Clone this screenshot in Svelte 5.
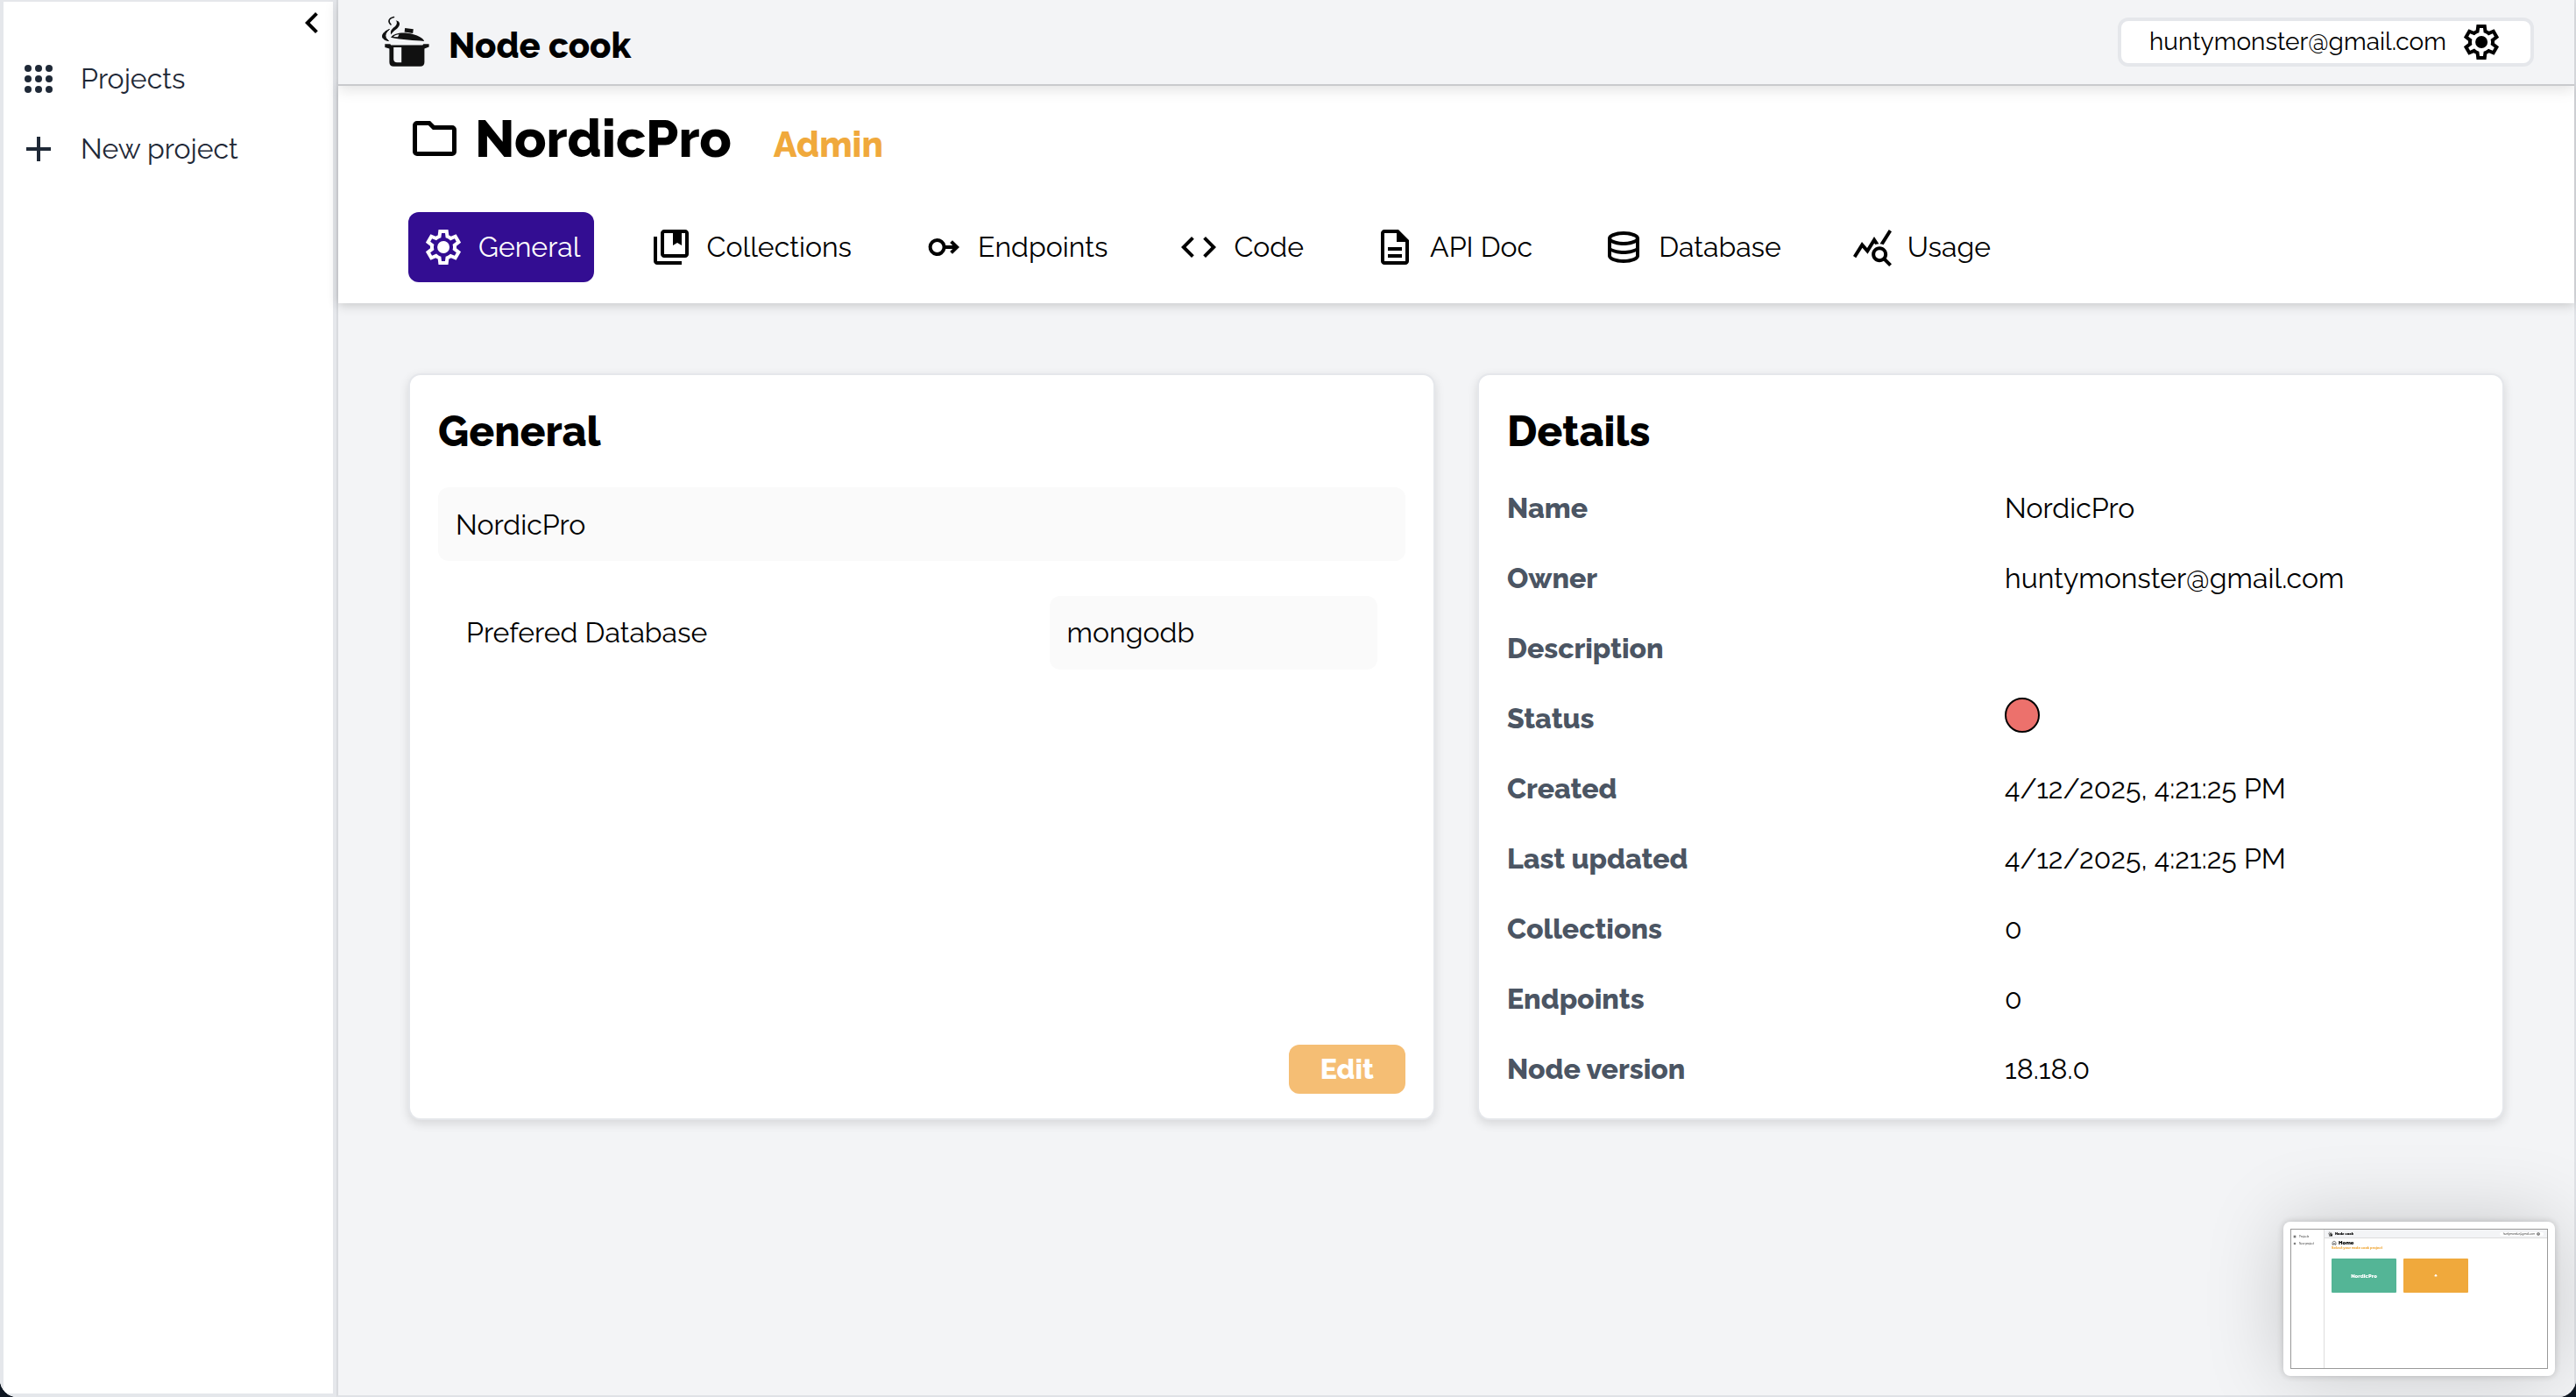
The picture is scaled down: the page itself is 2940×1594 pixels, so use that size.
<script>
  const gear =
    'M9.25 22l-.4-3.2q-.325-.125-.613-.3t-.562-.375L4.7 19.375l-2.75-4.75 2.575-1.95Q4.5 12.5 4.5 12.338v-.675q0-.163.025-.338L1.95 9.375l2.75-4.75 2.975 1.25q.275-.2.575-.375t.6-.3l.4-3.2h5.5l.4 3.2q.325.125.613.3t.562.375l2.975-1.25 2.75 4.75-2.575 1.95q.025.175.025.338v.674q0 .163-.05.338l2.575 1.95-2.75 4.75-2.95-1.25q-.275.2-.575.375t-.6.3l-.4 3.2zM11 20h1.975l.35-2.65q.775-.2 1.438-.587t1.212-.938l2.475 1.025.975-1.7-2.15-1.625q.125-.35.175-.737T17.5 12t-.05-.787-.175-.738l2.15-1.625-.975-1.7-2.475 1.05q-.55-.575-1.212-.962t-1.438-.588L13 4h-1.975l-.35 2.65q-.775.2-1.437.588t-1.213.937L5.55 7.15l-.975 1.7 2.15 1.6q-.125.375-.175.75t-.05.8q0 .4.05.775t.175.75l-2.15 1.625.975 1.7 2.475-1.05q.55.575 1.213.963t1.437.587zM12.05 15.5a3.5 3.5 0 1 0 0-7 3.5 3.5 0 1 0 0 7z';

  const tabs = [
    { label: 'General', path: gear },
    {
      label: 'Collections',
      path: 'M8 18q-.825 0-1.412-.587T6 16V4q0-.825.588-1.412T8 2h12q.825 0 1.413.588T22 4v12q0 .825-.587 1.413T20 18zm0-2h12V4h-2v7l-2.5-1.5L13 11V4H8zm-4 6q-.825 0-1.412-.587T2 20V6h2v14h14v2z',
    },
    {
      label: 'Endpoints',
      path: 'M8.8 7a5 5 0 0 1 4.9 4h3.9l-1.5-1.5L17.5 8.1l4 3.9-4 3.9-1.4-1.4L17.6 13h-3.9A5 5 0 1 1 8.8 7zm0 2a3 3 0 1 0 0 6 3 3 0 0 0 0-6z',
    },
    {
      label: 'Code',
      path: 'M9.4 16.6L4.8 12l4.6-4.6L8 6l-6 6 6 6 1.4-1.4zm5.2 0l4.6-4.6-4.6-4.6L16 6l6 6-6 6-1.4-1.4z',
    },
    {
      label: 'API Doc',
      path: 'M8 18h8v-2H8zm0-4h8v-2H8zm-2 8q-.825 0-1.412-.587T4 20V4q0-.825.588-1.412T6 2h8l6 6v12q0 .825-.587 1.413T18 22zm7-13V4H6v16h12V9z',
    },
    {
      label: 'Database',
      path: 'M12 21q-3.775 0-6.387-1.162T3 17V7q0-1.65 2.638-2.825T12 3t6.363 1.175T21 7v10q0 1.675-2.613 2.838T12 21m0-11.975q2.225 0 4.475-.638T19 7.025q-.275-.725-2.512-1.375T12 5q-2.275 0-4.462.638T5 7.025q.35.75 2.538 1.375T12 9.025M12 14q1.05 0 2.025-.1t1.863-.288t1.675-.462T19 12.525v-3q-.65.35-1.437.625t-1.675.463t-1.863.287T12 11t-2.05-.1t-1.888-.288T6.4 10.15T5 9.525v3q.625.35 1.4.625t1.663.463t1.887.287T12 14m0 5q1.15 0 2.338-.175t2.187-.462t1.675-.65t.8-.738v-2.45q-.65.35-1.437.625t-1.675.463t-1.863.287T12 16t-2.05-.1t-1.888-.288T6.4 15.15T5 14.525V17q.125.375.788.725t1.662.638t2.2.462T12 19',
    },
    {
      label: 'Usage',
      path: 'M19.88 18.47c.44-.7.7-1.51.7-2.39 0-2.49-2.01-4.5-4.5-4.5s-4.5 2.01-4.5 4.5 2.01 4.5 4.49 4.5c.88 0 1.7-.26 2.39-.7L21.58 23 23 21.58l-3.12-3.11zm-3.8.11a2.5 2.5 0 0 1 0-5 2.5 2.5 0 0 1 0 5zm-.36-8.5c-.74.02-1.45.18-2.1.45l-.55-.83-3.8 6.18-3.01-3.52-3.63 5.81L1 17l5-8 3 3.5L13 6l2.72 4.08zm2.59.5c-.64-.28-1.33-.45-2.05-.49L21.38 2 23 3.18l-4.69 7.4z',
    },
  ];

  const details = [
    ['Name', 'NordicPro'],
    ['Owner', 'huntymonster@gmail.com'],
    ['Description', ''],
    ['Status', null],
    ['Created', '4/12/2025, 4:21:25 PM'],
    ['Last updated', '4/12/2025, 4:21:25 PM'],
    ['Collections', '0'],
    ['Endpoints', '0'],
    ['Node version', '18.18.0'],
  ];

  let active = $state('General');
</script>

{#snippet pot()}
  <path d="M18.5 5.5C12.5 7 11.5 10.5 15 14" fill="none" stroke="#111" stroke-width="1.6" stroke-linecap="round" />
  <path d="M20.5 9.2C22.5 10.5 22.5 14 19.5 16.5C15.5 19.5 14 22 15.5 25.5C17.5 21.5 20.5 20.5 23 17.8C26.5 13.8 25.5 9.8 20.5 9.2z" fill="#111" />
  <path d="M13.5 19.5C3 23.5 3 31.5 12.5 32.5C7.5 29 7.5 24 13.5 19.5z" fill="#111" stroke="#111" stroke-width="1" stroke-linejoin="round" />
  <path d="M31.2 18l9.6 1.3-.6 4.6-9.6-1.4z" fill="#111" />
  <path d="M15 28.8C19 22.8 31 22.5 40 25C47 27 52 29.5 53.2 33C42 32 28 31.5 15 28.8z" fill="#111" />
  <path d="M18 27.9C19.5 25.9 22 25.5 24.5 25.3L23 28.3z" fill="#f3f4f6" />
  <path d="M8.3 36.2h6l1 1.3h36l1-1.3h6.3v3.3l-5.2 2V57q0 4.8-4.8 4.8H18.2q-4.8 0-4.8-4.8V41.5L8.3 40z" fill="#111" />
  <path d="M18.2 40h9v17.2h-5q-4 0-4-4z" fill="#f3f4f6" />
{/snippet}

<div class="app">
  <aside class="sidebar">
    <button class="collapse" aria-label="Collapse sidebar">
      <svg class="icon" viewBox="0 0 24 24"><path d="M15.41 7.41L14 6l-6 6 6 6 1.41-1.41L10.83 12z" /></svg>
    </button>
    <nav class="side-nav" aria-label="Main">
      <a class="side-link" href="#projects">
        <svg class="icon" viewBox="0 0 24 24" aria-hidden="true">
          {#each [6, 12, 18] as y}
            {#each [6, 12, 18] as x}
              <circle cx={x} cy={y} r="2" />
            {/each}
          {/each}
        </svg>
        <span>Projects</span>
      </a>
      <a class="side-link" href="#new">
        <svg class="icon" viewBox="0 0 24 24" aria-hidden="true"><path d="M11 19v-6H5v-2h6V5h2v6h6v2h-6v6z" /></svg>
        <span>New project</span>
      </a>
    </nav>
  </aside>

  <div class="page">
    <header class="topbar">
      <a class="brand" href="#home">
        <svg class="logo" viewBox="3 2 60 64" aria-hidden="true">{@render pot()}</svg>
        <span>Node cook</span>
      </a>
      <button class="account">
        <span>huntymonster@gmail.com</span>
        <svg class="icon" viewBox="0 0 24 24" aria-hidden="true"><path d={gear} /></svg>
      </button>
    </header>

    <section class="project-head">
      <div class="title-row">
        <svg class="folder" viewBox="0 0 24 24" aria-hidden="true">
          <path d="M4 20q-.825 0-1.412-.587T2 18V6q0-.825.588-1.412T4 4h6l2 2h8q.825 0 1.413.588T22 8v10q0 .825-.587 1.413T20 20zm0-2h16V8h-8.825l-2-2H4z" />
        </svg>
        <div class="title-text">
          <h1>NordicPro</h1>
          <span class="role">Admin</span>
        </div>
      </div>
      <nav class="tabs" aria-label="Project">
        {#each tabs as tab}
          <button class="tab" class:active={active === tab.label} onclick={() => (active = tab.label)}>
            <svg class="icon" viewBox="0 0 24 24" aria-hidden="true"><path d={tab.path} /></svg>
            <span>{tab.label}</span>
          </button>
        {/each}
      </nav>
    </section>

    <main class="content">
      <section class="card">
        <h2>General</h2>
        <input class="field" type="text" aria-label="Project name" value="NordicPro" />
        <div class="db-row">
          <label for="database">Prefered Database</label>
          <select id="database" class="field db">
            <option>mongodb</option>
          </select>
        </div>
        <button class="edit">Edit</button>
      </section>

      <section class="card">
        <h2>Details</h2>
        <dl>
          {#each details as [name, value]}
            <dt>{name}</dt>
            <dd>
              {#if value === null}
                <span class="status" role="img" aria-label="Stopped"></span>
              {:else}
                {value}
              {/if}
            </dd>
          {/each}
        </dl>
      </section>
    </main>
  </div>

  <div class="preview">
    <div class="mini">
      <div class="mini-side">
        <div class="mini-link">
          <svg class="mini-icon" viewBox="0 0 24 24"><path d="M4 4h16v16H4z" fill="#777" /></svg>
          <span>Projects</span>
        </div>
        <div class="mini-link">
          <svg class="mini-icon" viewBox="0 0 24 24"><path d="M10 20v-6H4v-4h6V4h4v6h6v4h-6v6z" /></svg>
          <span>New project</span>
        </div>
      </div>
      <div class="mini-page">
        <div class="mini-bar">
          <div class="mini-brand">
            <svg class="mini-logo" viewBox="3 2 60 64">{@render pot()}</svg>
            <span>Node cook</span>
          </div>
          <div class="mini-account">
            <span>huntymonster@gmail.com</span>
            <svg class="mini-icon" viewBox="0 0 24 24"><path d={gear} /></svg>
          </div>
        </div>
        <div class="mini-body">
          <div class="mini-title">
            <svg class="mini-home" viewBox="0 0 24 24">
              <path d="M4 10l8-6 8 6v11h-5v-6H9v6H4z" fill="none" stroke="#000" stroke-width="2" />
            </svg>
            <span>Home</span>
          </div>
          <div class="mini-sub">Select your node cook project</div>
          <div class="mini-cards">
            <div class="mini-card">NordicPro</div>
            <div class="mini-card add">+</div>
          </div>
        </div>
      </div>
    </div>
  </div>
</div>

<style>
  :global(body) {
    background: #0e1621;
  }
  .app,
  .app * {
    box-sizing: border-box;
  }
  .app {
    display: flex;
    min-height: 100vh;
    font-family: Raleway, Inter, sans-serif;
    font-size: 32px;
    line-height: 48px;
    color: #000;
    background: #f3f4f6;
    border-radius: 0 0 20px 20px;
    overflow: hidden;
  }
  button,
  input,
  select {
    margin: 0;
    border: 0;
    padding: 0;
    font: inherit;
    color: inherit;
    background: none;
    appearance: none;
    cursor: pointer;
  }
  a {
    color: inherit;
    text-decoration: none;
  }
  .icon {
    display: block;
    flex: none;
    width: 48px;
    height: 48px;
    fill: currentColor;
  }

  .sidebar {
    flex: none;
    display: flex;
    flex-direction: column;
    width: 384px;
    background: #fff;
    border: 4px solid #e5e7eb;
    border-top-width: 2px;
  }
  .collapse {
    align-self: flex-end;
  }
  .side-nav {
    display: flex;
    flex-direction: column;
    gap: 32px;
    padding: 16px;
    color: #1f2937;
  }
  .side-link {
    display: flex;
    gap: 24px;
  }

  .page {
    flex: 1;
    min-width: 0;
    border: 2px solid #e0e2e6;
    border-top: 0;
    border-left-color: #d9dbdf;
  }
  .topbar {
    position: relative;
    display: flex;
    align-items: center;
    justify-content: space-between;
    height: 98px;
    padding: 0 46px 0 48px;
    background: #f3f4f6;
    border-bottom: 2px solid #c9cacd;
    box-shadow: 0 4px 16px rgb(0 0 0 / 12%);
  }
  .brand {
    display: flex;
    align-items: flex-end;
    gap: 18px;
    font-size: 40px;
    font-weight: 800;
    line-height: 56px;
  }
  .logo {
    width: 60px;
    height: 64px;
  }
  .account {
    display: flex;
    align-items: center;
    gap: 16px;
    padding: 0 32px;
    font-size: 28px;
    background: #fff;
    border: 4px solid #e5e7eb;
    border-radius: 12px;
  }

  .project-head {
    padding: 24px 80px;
    background: #fff;
    box-shadow: 0 2px 12px rgb(0 0 0 / 20%);
  }
  .title-row {
    display: flex;
    align-items: center;
    gap: 16px;
    margin-bottom: 48px;
  }
  .folder {
    width: 60px;
    height: 60px;
  }
  .title-text {
    display: flex;
    align-items: baseline;
    gap: 48px;
  }
  h1 {
    margin: 0;
    font-size: 60px;
    font-weight: 800;
    line-height: 72px;
  }
  .role {
    font-size: 40px;
    font-weight: 800;
    color: #f0a93c;
  }
  .tabs {
    display: flex;
    gap: 48px;
  }
  .tab {
    display: flex;
    align-items: center;
    gap: 16px;
    padding: 16px;
    border-radius: 12px;
  }
  .tab.active {
    color: #fff;
    background: #330d92;
  }

  .content {
    display: grid;
    grid-template-columns: 1fr 1fr;
    gap: 48px;
    padding: 80px;
  }
  .card {
    display: flex;
    flex-direction: column;
    padding: 32px 32px 28px;
    background: #fff;
    border: 2px solid #e5e7eb;
    border-radius: 14px;
    box-shadow: 0 4px 12px rgb(0 0 0 / 12%);
  }
  h2 {
    margin: 0 0 32px;
    font-size: 48px;
    font-weight: 800;
    line-height: 64px;
  }
  .field {
    width: 100%;
    height: 84px;
    padding: 0 20px;
    background: #fafafa;
    border-radius: 12px;
  }
  .db-row {
    display: flex;
    align-items: center;
    justify-content: space-between;
    margin-top: 40px;
    padding: 0 32px;
  }
  .db {
    width: 36%;
  }
  .edit {
    align-self: flex-end;
    margin-top: auto;
    padding: 4px 36px;
    font-weight: 800;
    color: #fff;
    background: #f5be74;
    border-radius: 12px;
  }
  dl {
    display: grid;
    grid-template-columns: 1fr 1fr;
    gap: 32px;
    margin: 0 0 4px;
  }
  dt {
    font-weight: 800;
    color: #4b5563;
  }
  dd {
    height: 48px;
    margin: 0;
  }
  .status {
    display: block;
    width: 40px;
    height: 40px;
    background: #ec716c;
    border: 2px solid #000;
    border-radius: 50%;
  }

  .preview {
    position: fixed;
    right: 24px;
    bottom: 24px;
    width: 310px;
    height: 176px;
    padding: 8px;
    background: #fff;
    border-radius: 8px;
    box-shadow:
      0 0 8px rgb(0 0 0 / 20%),
      0 0 90px rgb(0 0 0 / 18%);
  }
  .mini {
    display: flex;
    height: 100%;
    font-size: 3px;
    line-height: 4px;
    border: 1px solid #999;
  }
  .mini-side {
    display: flex;
    flex-direction: column;
    gap: 4px;
    width: 38px;
    padding: 6px 2px;
    border-right: 1px solid #ddd;
  }
  .mini-link {
    display: flex;
    align-items: center;
    gap: 3px;
  }
  .mini-icon {
    width: 4px;
    height: 4px;
  }
  .mini-page {
    flex: 1;
  }
  .mini-bar {
    display: flex;
    align-items: center;
    justify-content: space-between;
    height: 10px;
    padding: 0 4px;
    background: #f3f4f6;
    border-bottom: 1px solid #ddd;
  }
  .mini-brand {
    display: flex;
    align-items: center;
    gap: 2px;
    font-size: 4px;
    font-weight: 900;
  }
  .mini-logo {
    width: 6px;
    height: 6px;
  }
  .mini-account {
    display: flex;
    align-items: center;
    gap: 2px;
    padding: 0 4px;
    background: #fff;
    border-radius: 2px;
  }
  .mini-body {
    padding: 2px 8px;
  }
  .mini-title {
    display: flex;
    align-items: center;
    gap: 2px;
    font-size: 6px;
    font-weight: 900;
    line-height: 6px;
  }
  .mini-home {
    width: 6px;
    height: 6px;
  }
  .mini-sub {
    font-size: 4px;
    font-weight: 800;
    line-height: 6px;
    color: #f0a93c;
  }
  .mini-cards {
    display: flex;
    gap: 8px;
    margin-top: 9px;
  }
  .mini-card {
    width: 74px;
    border-radius: 1px;
    font-size: 6px;
    font-weight: 900;
    line-height: 39px;
    text-align: center;
    color: #fff;
    background: #54b596;
  }
  .mini-card.add {
    font-size: 8px;
    background: #f0a93c;
  }
</style>
